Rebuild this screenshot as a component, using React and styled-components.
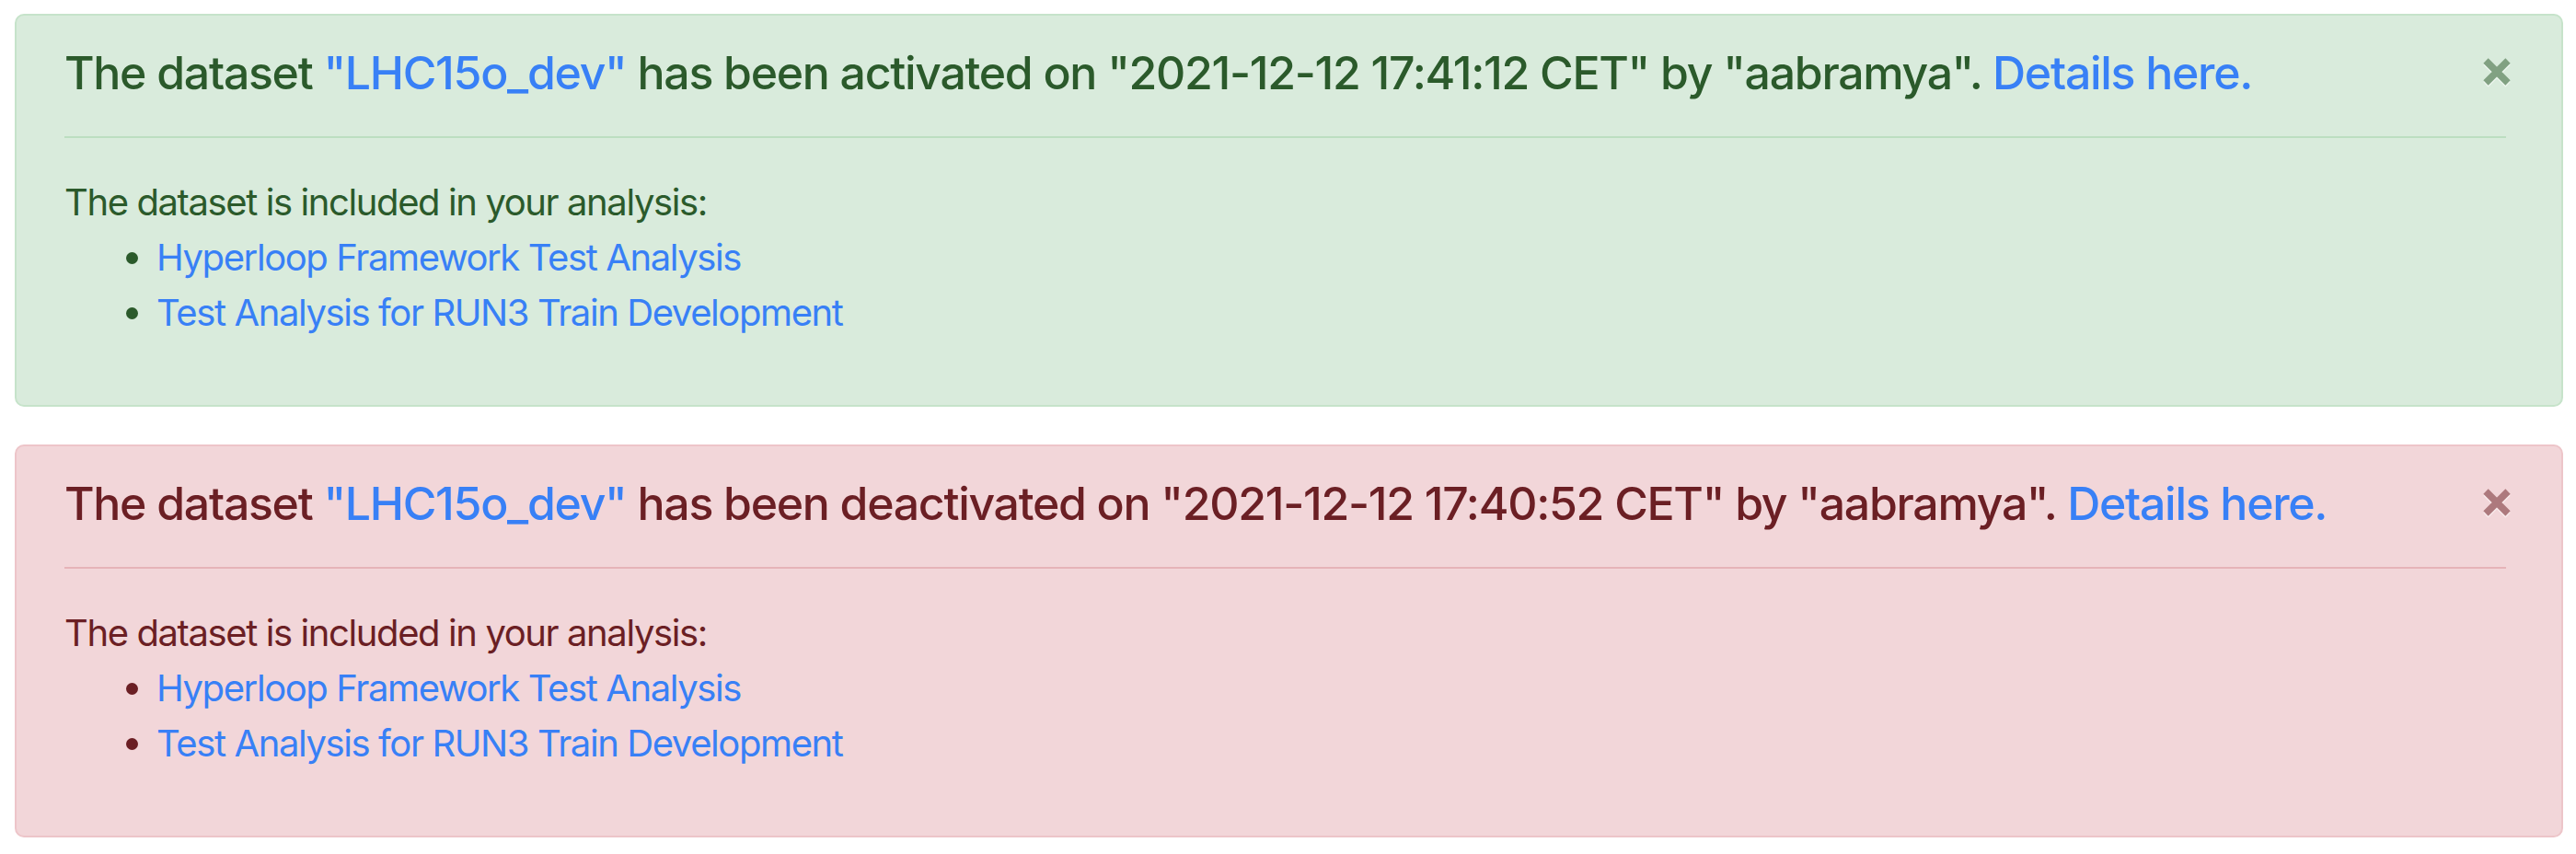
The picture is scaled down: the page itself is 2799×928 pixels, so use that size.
import React from 'react';
import styled, { createGlobalStyle } from 'styled-components';

const GlobalStyle = createGlobalStyle`
  body {
    margin: 0;
    padding: 15px 14px 0 16px;
    background: #fff;
    font-family: Inter, "Liberation Sans", sans-serif;
  }
`;

const variants = {
  success: {
    bg: '#d9ebdc',
    border: '#c6e3ca',
    text: '#2b5a2b',
    rule: '#bcdec1',
  },
  danger: {
    bg: '#f2d6d9',
    border: '#edc5c9',
    text: '#6b1f24',
    rule: '#e6b3b8',
  },
};

const AlertBox = styled.div`
  background: ${p => variants[p.$variant].bg};
  border: 2px solid ${p => variants[p.$variant].border};
  color: ${p => variants[p.$variant].text};
  border-radius: 10px;
  padding: 30px 60px 30px 52px;
  margin-bottom: 41px;
`;

const HeaderRow = styled.div`
  display: flex;
  align-items: center;
  justify-content: space-between;
`;

const Heading = styled.h5`
  margin: 0;
  font-size: 50px;
  font-weight: 500;
  line-height: 60px;
  padding-top: 2px;
  letter-spacing: -1.3px;
`;

const Link = styled.a`
  color: #3880f6;
  text-decoration: none;
`;

const CloseButton = styled.button`
  border: 0;
  background: transparent;
  padding: 0;
  margin-right: -6px;
  width: 32px;
  height: 32px;
  color: inherit;
  opacity: 0.5;
  cursor: pointer;
  display: flex;
  filter: drop-shadow(0 2px 0 #fff);
`;

const Rule = styled.hr`
  border: 0;
  border-top: 2px solid ${p => variants[p.$variant].rule};
  margin: 39px 0 40px;
`;

const Body = styled.p`
  margin: 0;
  font-size: 40px;
  line-height: 60px;
  letter-spacing: -1.4px;
`;

const List = styled.ul`
  margin: 0 0 40px;
  padding-left: 100px;
  font-size: 40px;
  line-height: 60px;
  letter-spacing: -1.4px;
`;

const CloseIcon = () => (
  <svg width="32" height="32" viewBox="0 0 32 32">
    <path d="M4 4 L28 28 M28 4 L4 28" stroke="currentColor" strokeWidth="7.5" />
  </svg>
);

const DatasetAlert = ({ variant, action, date, analyses }) => (
  <AlertBox $variant={variant}>
    <HeaderRow>
      <Heading>
        The dataset <Link href="#">"LHC15o_dev"</Link> has been {action} on "{date}" by "aabramya".{' '}
        <Link href="#">Details here.</Link>
      </Heading>
      <CloseButton aria-label="Close">
        <CloseIcon />
      </CloseButton>
    </HeaderRow>
    <Rule $variant={variant} />
    <Body>The dataset is included in your analysis:</Body>
    <List>
      {analyses.map(name => (
        <li key={name}>
          <Link href="#">{name}</Link>
        </li>
      ))}
    </List>
  </AlertBox>
);

const analyses = ['Hyperloop Framework Test Analysis', 'Test Analysis for RUN3 Train Development'];

export default function App() {
  return (
    <>
      <GlobalStyle />
      <DatasetAlert variant="success" action="activated" date="2021-12-12 17:41:12 CET" analyses={analyses} />
      <DatasetAlert variant="danger" action="deactivated" date="2021-12-12 17:40:52 CET" analyses={analyses} />
    </>
  );
}
